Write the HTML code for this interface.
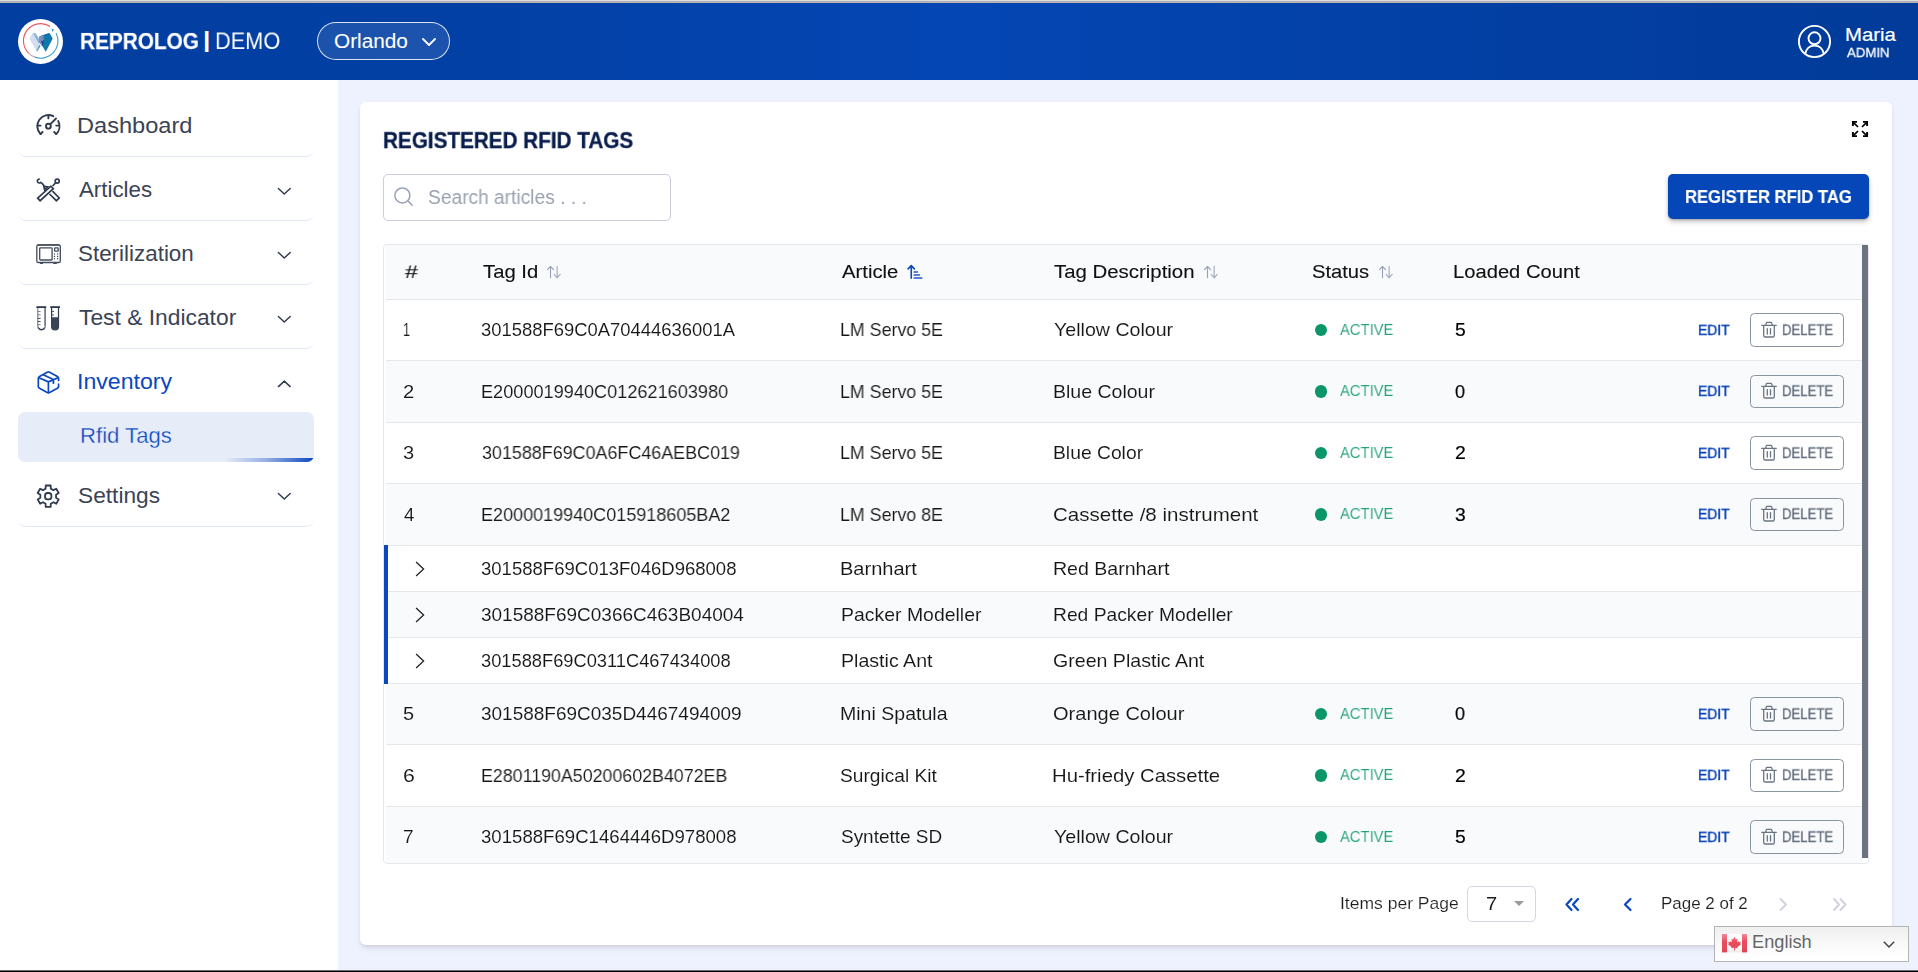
<!DOCTYPE html>
<html lang="en">
<head>
<meta charset="utf-8">
<title>REPROLOG | DEMO - Registered RFID Tags</title>
<style>
*{box-sizing:border-box;margin:0;padding:0}
html,body{width:1918px;height:972px;overflow:hidden;background:#eef2fe}
body{font-family:"Liberation Sans",Arial,Helvetica,sans-serif;position:relative;-webkit-font-smoothing:antialiased}
.t{position:absolute;white-space:pre;transform-origin:0 84.65%;display:block}
#content .t{will-change:transform}
.abs{position:absolute}
svg{position:absolute;overflow:visible}
#topstrip{position:absolute;left:0;top:0;width:1918px;height:3px;background:linear-gradient(180deg,#dedee2 0,#dedee2 33.3%,#aeaeb1 33.3%,#aeaeb1 66.6%,#bab7b2 66.6%,#bab7b2 100%);z-index:5}
header{position:absolute;left:0;top:0;width:1918px;height:80px;background:linear-gradient(90deg,#023e9f 0%,#0340a5 25%,#0446b4 50%,#0340a5 75%,#023b99 100%)}
.logo{position:absolute;left:18px;top:19px;width:45px;height:45px;border-radius:50%;background:#fff}
.pill{position:absolute;left:317px;top:22px;width:133px;height:38px;border-radius:19px;border:1px solid rgba(255,255,255,.85);background:rgba(255,255,255,.1)}
nav{position:absolute;left:0;top:80px;width:338px;height:892px;background:#fff}
.navitem{position:absolute;left:18px;width:296px;height:64px;border-bottom:1px solid #e3e8f5;border-radius:0 0 8px 8px}
.navitem.nb{border-bottom:0}
.sub{position:absolute;left:18px;top:332px;width:296px;height:50px;border-radius:7px;background:#e6ecf8;overflow:hidden}
.sub i{position:absolute;right:0;bottom:0;width:90px;height:4px;background:linear-gradient(90deg,rgba(11,71,190,0) 0%,rgba(11,71,190,.35) 45%,#0b47be 100%)}
main{position:absolute;left:338px;top:80px;width:1580px;height:892px;background:#eef2fe}
.card{position:absolute;left:22px;top:22px;width:1532px;height:843px;background:#fff;border-radius:6px;box-shadow:0 4px 6px -1px rgba(0,0,0,.1),0 2px 4px -2px rgba(0,0,0,.1)}
.search{position:absolute;left:383px;top:174px;width:288px;height:47px;border:1px solid #c9ced8;border-radius:5px;background:#fff}
.btn{position:absolute;left:1668px;top:174px;width:201px;height:45px;border-radius:5px;background:#0546b8;box-shadow:0 3px 5px rgba(0,0,0,.22),0 1px 2px rgba(0,0,0,.18)}
.tbl{position:absolute;left:383px;top:244px;width:1486px;height:620px;border:1px solid #e5e7eb;border-radius:4px;background:#fff;overflow:hidden}
.row{position:absolute;left:2px;width:1477px;border-bottom:1px solid #e5e7eb}
.row.z{background:#f9fafb}
.row.hd{background:#f9fafb}
.bar{position:absolute;left:0;top:300px;width:4px;height:139px;background:#0b47be}
.thumb{position:absolute;left:1862px;top:245px;width:6px;height:613px;background:#6b7280}
.dot{position:absolute;width:12.2px;height:12.2px;border-radius:50%;background:#0a9668}
.del{position:absolute;width:94px;height:34px;border:1px solid #8a93a2;border-radius:4.5px}
.sel{position:absolute;left:1467px;top:886px;width:69px;height:36px;border:1px solid #d3d7df;border-radius:5px;background:#fff}
.lang{position:absolute;left:1714px;top:926px;width:195px;height:36px;border:1px solid #b4b4b4;background:linear-gradient(180deg,#efefef 0%,#fbfbfb 60%,#ffffff 100%)}
#botstrip{position:absolute;left:0;top:970px;width:1918px;height:2px;background:linear-gradient(180deg,#6f7076 0,#6f7076 50%,#000 50%,#000 100%);z-index:9}
</style>
</head>
<body>
<header><div class="logo"><svg style="left:0.0px;top:0.0px" width="45" height="45" viewBox="0 0 45 45" ><path d="M32.14 7.45 A17.25 17.25 0 0 0 10.76 34.33" fill="none" stroke="#ea5660" stroke-width="1.1"/><path d="M10.76 34.33 A17.25 17.25 0 0 0 16.84 38.13" fill="none" stroke="#c2aaa6" stroke-width="1.1"/><path d="M16.84 38.13 A17.25 17.25 0 0 0 38.11 14.09" fill="none" stroke="#3fa4cb" stroke-width="1.1"/><path d="M33.6 9.6 L35.9 10.4 L34.4 13 Z" fill="#2d96bf"/><path d="M14.9 14 L11.4 19.6 L18.3 32.1 L21.4 25.2 L20.5 21 Z" fill="#d3ddf0"/><path d="M14.9 14 L17.6 14.3 L22.8 22.4 L20.8 24.6 Z" fill="#6ea5cf" opacity=".8"/><path d="M18.3 32.1 L21.3 25.6 L22.6 27 L19.3 32.5 Z" fill="#4aa3c8"/><path d="M23.2 16.4 L31.5 14 L34.7 19.6 L27.8 32.8 L21.8 23 Z" fill="#0f78ab"/><path d="M21 17.4 L25.6 16 L25.8 22 L24 27.2 L21.2 23.6 Z" fill="#7c8db6"/><path d="M23 22.5 L26 21 L25 27.5 Z" fill="#2743a3"/><path d="M27 15.5 L31 14.2 L29.6 17.4 Z" fill="#3556b3" opacity=".8"/></svg></div><h1><span class="t" style="left:80.15px;top:29.02px;font-size:23.84px;line-height:23.84px;color:#ffffff;transform:scale(0.8722,0.9494);will-change:transform;font-weight:700;-webkit-text-stroke:0.25px #ffffff;">REPROLOG</span><span class="t" style="left:202.92px;top:28.75px;font-size:21.8px;line-height:21.8px;color:#ffffff;transform:scaleX(1.2);font-weight:700;">|</span><span class="t" style="left:215.37px;top:29.02px;font-size:23.84px;line-height:23.84px;color:#ffffff;transform:scale(0.9125,0.9718);will-change:transform;font-weight:400;">DEMO</span></h1><div class="pill"></div><span class="t" style="left:334.45px;top:31.56px;font-size:19.77px;line-height:19.77px;color:#ffffff;transform:scaleX(1.0505);font-weight:400;-webkit-text-stroke:0.1px #ffffff;">Orlando</span><svg style="left:421.5px;top:38.0px" width="14" height="8" viewBox="0 0 14 8" ><path d="M1 1 L7 7 L13 1" fill="none" stroke="#fff" stroke-width="1.8" stroke-linecap="round" stroke-linejoin="round"/></svg><svg style="left:1798.0px;top:25.0px" width="33" height="33" viewBox="0 0 33 33" ><circle cx="16.5" cy="16.5" r="15.6" fill="none" stroke="#fff" stroke-width="1.9"/><circle cx="16.5" cy="13.3" r="6" fill="none" stroke="#fff" stroke-width="1.9"/><path d="M7.4 28.6 C8.4 23.4 12 20.6 16.5 20.6 C21 20.6 24.6 23.4 25.6 28.6" fill="none" stroke="#fff" stroke-width="1.9"/></svg><span class="t" style="left:1845.30px;top:26.00px;font-size:18.9px;line-height:18.9px;color:#ffffff;transform:scaleX(1.0778);font-weight:400;-webkit-text-stroke:0.2px #ffffff;">Maria</span><span class="t" style="left:1846.80px;top:46.31px;font-size:13.81px;line-height:13.81px;color:#ffffff;transform:scale(0.9548,0.9176);will-change:transform;font-weight:400;-webkit-text-stroke:0.3px #ffffff;">ADMIN</span></header>
<div id="topstrip"></div>
<nav><div class="navitem" style="top:13px"></div><svg style="left:28.0px;top:26.0px" width="40" height="40" viewBox="0 0 40 40" ><path d="M12.55 28.05 A11.1 11.1 0 0 1 25.27 10.22" fill="none" stroke="#303b50" stroke-width="1.9" stroke-linecap="round" stroke-linejoin="round"/><path d="M30.20 14.99 A11.1 11.1 0 0 1 28.25 28.05" fill="none" stroke="#303b50" stroke-width="1.9" stroke-linecap="round" stroke-linejoin="round"/><path d="M20.4 9.6 V12.4 M9.6 19.6 H12.6 M28.2 19.6 H31.2 M12.55 28.05 L14.6 26 M28.25 28.05 L26.2 26 M22.4 18.2 L28 12.5" fill="none" stroke="#303b50" stroke-width="1.9" stroke-linecap="round" stroke-linejoin="round"/><circle cx="20.4" cy="20.2" r="2.4" fill="none" stroke="#303b50" stroke-width="1.9" stroke-linecap="round" stroke-linejoin="round"/></svg><a class="t" style="left:76.76px;top:36.01px;font-size:21.37px;line-height:21.37px;color:#3b4354;transform:scaleX(1.105);font-weight:400;">Dashboard</a><div class="navitem" style="top:77px"></div><svg style="left:28.0px;top:90.0px" width="40" height="40" viewBox="0 0 40 40" ><path d="M24.5 21.2 L31.2 28 L28.4 30.7 L21.5 24" fill="none" stroke="#303b50" stroke-width="1.7" stroke-linejoin="miter"/><path d="M9.7 28.2 L22.9 16.1 L25.3 18.6 L12.1 30.7 Z" fill="none" stroke="#303b50" stroke-width="1.7" stroke-linejoin="miter" fill="#fff"/><path d="M15.9 16.4 L19.6 16.9 L16.6 19.9 Z" fill="none" stroke="#303b50" stroke-width="1.7" stroke-linejoin="miter" stroke-width="1.25" stroke-linejoin="round"/><path d="M24.7 16 L27.6 12.8" fill="none" stroke="#303b50" stroke-width="1.7" stroke-linejoin="miter"/><circle cx="29.2" cy="11.1" r="2.05" fill="none" stroke="#303b50" stroke-width="1.7" stroke-linejoin="miter"/><path d="M16.2 15.9 L13.3 12.5" fill="none" stroke="#303b50" stroke-width="1.7" stroke-linejoin="miter"/><path d="M11.2 9 A2 2 0 1 0 12.8 12.4" fill="none" stroke="#303b50" stroke-width="1.7" stroke-linejoin="miter" stroke-linecap="round"/></svg><a class="t" style="left:79.20px;top:99.81px;font-size:21.37px;line-height:21.37px;color:#3b4354;transform:scaleX(1.0437);font-weight:400;">Articles</a><svg style="left:277.0px;top:107.4px" width="14.6" height="7.8" viewBox="0 0 14.6 7.8" ><path d="M1.4 1.5 L7.3 7 L13.2 1.5" fill="none" stroke="#303b50" stroke-width="1.45" stroke-linecap="round" stroke-linejoin="round"/></svg><div class="navitem" style="top:141px"></div><svg style="left:28.0px;top:154.0px" width="40" height="40" viewBox="0 0 40 40" ><rect x="8.8" y="10.9" width="23.5" height="17.6" rx="1.6" fill="none" stroke="#434c5c" stroke-width="1.3"/><path d="M9.6 11 H31.6" stroke="#434c5c" stroke-width="1.5"/><rect x="11.7" y="13.8" width="12.4" height="12.2" rx="0.8" fill="none" stroke="#434c5c" stroke-width="1.3" stroke-width="1.4"/><rect x="26.6" y="13.9" width="3.6" height="3.3" rx="0.6" fill="none" stroke="#434c5c" stroke-width="1.3" stroke-width="1.5"/><rect x="25.9" y="19.4" width="1.2" height="1.2" fill="#434c5c"/><rect x="25.9" y="21.8" width="1.2" height="1.2" fill="#434c5c"/><rect x="25.9" y="24.1" width="1.2" height="1.2" fill="#434c5c"/><rect x="29" y="19.4" width="1.2" height="1.2" fill="#434c5c"/><rect x="29" y="21.8" width="1.2" height="1.2" fill="#434c5c"/><rect x="29" y="24.1" width="1.2" height="1.2" fill="#434c5c"/><rect x="12.1" y="29" width="2.9" height="0.9" fill="#303b50"/><rect x="25.3" y="29" width="3.5" height="0.9" fill="#303b50"/></svg><a class="t" style="left:78.14px;top:164.21px;font-size:21.37px;line-height:21.37px;color:#3b4354;transform:scaleX(1.0487);font-weight:400;">Sterilization</a><svg style="left:277.0px;top:171.4px" width="14.6" height="7.8" viewBox="0 0 14.6 7.8" ><path d="M1.4 1.5 L7.3 7 L13.2 1.5" fill="none" stroke="#303b50" stroke-width="1.45" stroke-linecap="round" stroke-linejoin="round"/></svg><div class="navitem" style="top:205px"></div><svg style="left:28.0px;top:218.0px" width="40" height="40" viewBox="0 0 40 40" ><rect x="8.4" y="8.2" width="9.8" height="1.8" fill="#303b50"/><path d="M9.8 10 V28.2 A3.7 3.7 0 0 0 17.2 28.2 V10" fill="none" stroke="#6d7585" stroke-width="1.1"/><path d="M10.2 29.6 A3.7 3.7 0 0 0 16.8 29.6" fill="none" stroke="#303b50" stroke-width="1.2"/><rect x="16.4" y="10" width="1.3" height="18" fill="#6d7585"/><rect x="9.9" y="13.1" width="2.7" height="0.9" fill="#6d7585"/><rect x="9.9" y="16.4" width="2.7" height="0.9" fill="#6d7585"/><rect x="9.9" y="19.9" width="2.7" height="0.9" fill="#303b50"/><rect x="9.9" y="23.0" width="2.7" height="0.9" fill="#303b50"/><rect x="9.9" y="26.2" width="2.7" height="0.9" fill="#6d7585"/><rect x="22.2" y="8.2" width="9.8" height="1.8" fill="#303b50"/><path d="M23.6 10 V28.4 A3.45 3.45 0 0 0 30.5 28.4 V10" fill="none" stroke="#303b50" stroke-width="1.2"/><path d="M23.6 19.2 H30.5 V28.4 A3.45 3.45 0 0 1 23.6 28.4 Z" fill="#3a4355"/><rect x="24.2" y="13.1" width="1.8" height="0.9" fill="#303b50"/><rect x="24.2" y="16.2" width="1.8" height="1.3" fill="#6d7585"/></svg><a class="t" style="left:79.20px;top:227.91px;font-size:21.37px;line-height:21.37px;color:#3b4354;transform:scaleX(1.0682);font-weight:400;">Test &amp; Indicator</a><svg style="left:277.0px;top:235.4px" width="14.6" height="7.8" viewBox="0 0 14.6 7.8" ><path d="M1.4 1.5 L7.3 7 L13.2 1.5" fill="none" stroke="#303b50" stroke-width="1.45" stroke-linecap="round" stroke-linejoin="round"/></svg><div class="navitem nb" style="top:269px"></div><svg style="left:28.0px;top:282.0px" width="40" height="40" viewBox="0 0 40 40" ><path d="M30.6 18.4 V16.6 Q30.6 15.2 29.4 14.5 L21.6 10.2 Q20.4 9.6 19.2 10.2 L11.5 14.5 Q10.3 15.2 10.3 16.6 V24.2 Q10.3 25.6 11.5 26.3 L19.2 30.5 Q20.4 31.1 21.6 30.5 L29.4 26.3 Q30.6 25.6 30.6 24.2 V22.2" fill="none" stroke="#0b47be" stroke-width="1.7" stroke-linecap="round" stroke-linejoin="round"/><path d="M10.9 15.8 L20.4 19.9 L30 15.8 M20.4 19.9 V30.6 M15.8 12.9 L25.4 17.6 V21.2" fill="none" stroke="#0b47be" stroke-width="1.7" stroke-linecap="round" stroke-linejoin="round"/></svg><a class="t" style="left:77.03px;top:291.81px;font-size:21.37px;line-height:21.37px;color:#0b47be;transform:scaleX(1.0826);font-weight:400;">Inventory</a><svg style="left:277.0px;top:299.6px" width="14.6" height="7.8" viewBox="0 0 14.6 7.8" ><path d="M1.4 6.6 L7.3 1.1 L13.2 6.6" fill="none" stroke="#303b50" stroke-width="1.45" stroke-linecap="round" stroke-linejoin="round"/></svg><div class="sub"><i></i></div><a class="t thin" style="left:79.68px;top:345.91px;font-size:21.37px;line-height:21.37px;color:#0b47be;transform:scaleX(1.0361);font-weight:400;-webkit-text-stroke:0.3px #e6ecf8;">Rfid Tags</a><div class="navitem" style="top:383px"></div><svg style="left:28.0px;top:396.0px" width="40" height="40" viewBox="0 0 40 40" ><path d="M17.60 12.64 L17.73 9.48 L22.67 9.48 L22.80 12.64 L25.45 14.16 L28.24 12.70 L30.72 16.98 L28.05 18.67 L28.05 21.73 L30.72 23.42 L28.24 27.70 L25.45 26.24 L22.80 27.76 L22.67 30.92 L17.73 30.92 L17.60 27.76 L14.95 26.24 L12.16 27.70 L9.68 23.42 L12.35 21.73 L12.35 18.67 L9.68 16.98 L12.16 12.70 L14.95 14.16 Z" fill="none" stroke="#303b50" stroke-width="1.8" stroke-linejoin="round"/><rect x="17" y="17" width="6.4" height="6.4" rx="2.6" fill="none" stroke="#303b50" stroke-width="1.8" stroke-linejoin="round" stroke-width="1.9"/></svg><a class="t" style="left:78.14px;top:405.61px;font-size:21.37px;line-height:21.37px;color:#3b4354;transform:scaleX(1.0633);font-weight:400;">Settings</a><svg style="left:277.0px;top:412.4px" width="14.6" height="7.8" viewBox="0 0 14.6 7.8" ><path d="M1.4 1.5 L7.3 7 L13.2 1.5" fill="none" stroke="#303b50" stroke-width="1.45" stroke-linecap="round" stroke-linejoin="round"/></svg></nav>
<main><section class="card"></section></main>
<div id="content"><h2 class="t" style="left:382.57px;top:129.15px;font-size:23.69px;line-height:23.69px;color:#0a1e4d;transform:scale(0.873,0.9362);will-change:transform;font-weight:700;-webkit-text-stroke:0.35px #0a1e4d;">REGISTERED RFID TAGS</h2><svg style="left:1852.0px;top:121.0px" width="16" height="16" viewBox="0 0 16 16" ><g fill="none" stroke="#000" stroke-width="1.7"><path d="M1.6 1.6 L6 6 M10 6 L14.4 1.6 M1.6 14.4 L6 10 M10 10 L14.4 14.4"/></g><g fill="none" stroke="#000" stroke-width="1.9"><path d="M0.9 5 V0.9 H5 M11 0.9 H15.1 V5 M15.1 11 V15.1 H11 M5 15.1 H0.9 V11"/></g></svg><div class="search"></div><svg style="left:394.0px;top:187.0px" width="19" height="19" viewBox="0 0 19 19" ><circle cx="8.4" cy="8.4" r="7.5" fill="none" stroke="#98a2b6" stroke-width="1.5"/><path d="M13.8 13.8 L18.2 18.2" stroke="#98a2b6" stroke-width="1.5" stroke-linecap="round"/></svg><span class="t" style="left:427.99px;top:188.34px;font-size:19.33px;line-height:19.33px;color:#9aa2b1;transform:scaleX(0.9915);font-weight:400;">Search articles . . .</span><div class="btn"></div><span class="t" style="left:1685.00px;top:188.27px;font-size:18.46px;line-height:18.46px;color:#ffffff;transform:scaleX(0.9011);font-weight:700;-webkit-text-stroke:0.15px #ffffff;">REGISTER RFID TAG</span><div class="tbl"><div class="row hd" style="top:0;height:55px"></div><div class="row" style="top:55px;height:61px;left:2px;width:1477px"></div><div class="row z" style="top:116px;height:62px;left:2px;width:1477px"></div><div class="row" style="top:178px;height:61px;left:2px;width:1477px"></div><div class="row z" style="top:239px;height:62px;left:2px;width:1477px"></div><div class="row" style="top:301px;height:46px;left:4px;width:1475px"></div><div class="row z" style="top:347px;height:46px;left:4px;width:1475px"></div><div class="row" style="top:393px;height:46px;left:4px;width:1475px"></div><div class="row z" style="top:439px;height:61px;left:2px;width:1477px"></div><div class="row" style="top:500px;height:62px;left:2px;width:1477px"></div><div class="row z" style="top:562px;height:62px;left:2px;width:1477px"></div><div class="bar"></div><b class="t" style="left:20.58px;top:18.35px;font-size:18.02px;line-height:18.02px;color:#111111;transform:scale(1.2907,0.9631);will-change:transform;font-weight:400;-webkit-text-stroke:0.12px #111111;">#</b><b class="t" style="left:98.60px;top:18.35px;font-size:18.02px;line-height:18.02px;color:#111111;transform:scaleX(1.125);font-weight:400;-webkit-text-stroke:0.12px #111111;">Tag Id</b><b class="t" style="left:457.66px;top:18.35px;font-size:18.02px;line-height:18.02px;color:#111111;transform:scaleX(1.1244);font-weight:400;-webkit-text-stroke:0.12px #111111;">Article</b><b class="t" style="left:669.59px;top:18.35px;font-size:18.02px;line-height:18.02px;color:#111111;transform:scaleX(1.1316);font-weight:400;-webkit-text-stroke:0.12px #111111;">Tag Description</b><b class="t" style="left:927.89px;top:18.35px;font-size:18.02px;line-height:18.02px;color:#111111;transform:scaleX(1.1194);font-weight:400;-webkit-text-stroke:0.12px #111111;">Status</b><b class="t" style="left:1069.18px;top:18.35px;font-size:18.02px;line-height:18.02px;color:#111111;transform:scaleX(1.1203);font-weight:400;-webkit-text-stroke:0.12px #111111;">Loaded Count</b><svg style="left:156.0px;top:13.0px" width="30" height="28" viewBox="0 0 30 28" ><path d="M10.5 19.6 V8.8 M7.4 11.6 L10.5 8.5 L13.6 11.6" fill="none" stroke="#98a3bb" stroke-width="1.15" stroke-linecap="round" stroke-linejoin="round"/><path d="M17.15 8.2 V19.6 M14.2 16.4 L17.15 19.8 L20.2 16.4" fill="none" stroke="#a4adbf" stroke-width="1.15" stroke-linecap="round" stroke-linejoin="round"/></svg><svg style="left:516.0px;top:13.0px" width="30" height="28" viewBox="0 0 30 28" ><path d="M11.25 20.3 V7.9 M8.1 10.9 L11.25 7.6 L14.4 10.9" fill="none" stroke="#0b47be" stroke-width="1.6" stroke-linecap="round" stroke-linejoin="round"/><path d="M14.2 14 H17.3 M14.2 17 H19.4 M14.2 20 H21.8" fill="none" stroke="#1f58c4" stroke-width="1.6" stroke-linecap="round"/></svg><svg style="left:813.0px;top:13.0px" width="30" height="28" viewBox="0 0 30 28" ><path d="M10.5 19.6 V8.8 M7.4 11.6 L10.5 8.5 L13.6 11.6" fill="none" stroke="#98a3bb" stroke-width="1.15" stroke-linecap="round" stroke-linejoin="round"/><path d="M17.15 8.2 V19.6 M14.2 16.4 L17.15 19.8 L20.2 16.4" fill="none" stroke="#a4adbf" stroke-width="1.15" stroke-linecap="round" stroke-linejoin="round"/></svg><svg style="left:987.9px;top:13.0px" width="30" height="28" viewBox="0 0 30 28" ><path d="M10.5 19.6 V8.8 M7.4 11.6 L10.5 8.5 L13.6 11.6" fill="none" stroke="#98a3bb" stroke-width="1.15" stroke-linecap="round" stroke-linejoin="round"/><path d="M17.15 8.2 V19.6 M14.2 16.4 L17.15 19.8 L20.2 16.4" fill="none" stroke="#a4adbf" stroke-width="1.15" stroke-linecap="round" stroke-linejoin="round"/></svg><div class="dot" style="left:931px;top:78.9px"></div><div class="del" style="left:1366px;top:68px;height:34px"></div><svg style="left:1376.0px;top:74.7px" width="18" height="20" viewBox="0 0 18 20" ><path d="M1.7 5.3 H16.3 M5.6 5.1 L6.4 2.6 Q6.5 2.3 6.9 2.3 H11.1 Q11.5 2.3 11.6 2.6 L12.4 5.1 M3.7 5.6 V15.4 Q3.7 17 5.3 17 H12.7 Q14.3 17 14.3 15.4 V5.6 M7.3 8.6 V14.1 M10.5 8.6 V14.1" fill="none" stroke="#6b7482" stroke-width="1.3" stroke-linecap="round" stroke-linejoin="round"/></svg><span class="t thin" style="left:18.69px;top:75.62px;font-size:18.17px;line-height:18.17px;color:#161616;transform:scaleX(0.7);font-weight:400;-webkit-text-stroke:0.08px #ffffff;">1</span><span class="t thin" style="left:97.48px;top:75.62px;font-size:18.17px;line-height:18.17px;color:#161616;transform:scaleX(1.0145);font-weight:400;-webkit-text-stroke:0.08px #ffffff;">301588F69C0A70444636001A</span><span class="t thin" style="left:456.31px;top:75.62px;font-size:18.17px;line-height:18.17px;color:#161616;transform:scaleX(0.9814);font-weight:400;-webkit-text-stroke:0.08px #ffffff;">LM Servo 5E</span><span class="t thin" style="left:669.58px;top:75.62px;font-size:18.17px;line-height:18.17px;color:#161616;transform:scaleX(1.0798);font-weight:400;-webkit-text-stroke:0.08px #ffffff;">Yellow Colour</span><span class="t thin" style="left:955.75px;top:76.59px;font-size:15.84px;line-height:15.84px;color:#0f9a6b;transform:scale(0.9336,0.9267);will-change:transform;font-weight:400;-webkit-text-stroke:0.15px #ffffff;">ACTIVE</span><span class="t" style="left:1070.68px;top:75.51px;font-size:18.3px;line-height:18.3px;color:#000000;transform:scaleX(1.0556);font-weight:400;-webkit-text-stroke:0.2px #000000;">5</span><span class="t" style="left:1314.21px;top:76.59px;font-size:15.84px;line-height:15.84px;color:#0a43b8;transform:scale(0.8756,0.8576);will-change:transform;font-weight:400;-webkit-text-stroke:0.5px #0a43b8;">EDIT</span><span class="t" style="left:1398.47px;top:76.71px;font-size:15.7px;line-height:15.7px;color:#5f6a79;transform:scale(0.8383,0.8862);will-change:transform;font-weight:400;-webkit-text-stroke:0.3px #5f6a79;">DELETE</span><div class="dot" style="left:931px;top:140.4px"></div><div class="del" style="left:1366px;top:130px;height:33px"></div><svg style="left:1376.0px;top:136.2px" width="18" height="20" viewBox="0 0 18 20" ><path d="M1.7 5.3 H16.3 M5.6 5.1 L6.4 2.6 Q6.5 2.3 6.9 2.3 H11.1 Q11.5 2.3 11.6 2.6 L12.4 5.1 M3.7 5.6 V15.4 Q3.7 17 5.3 17 H12.7 Q14.3 17 14.3 15.4 V5.6 M7.3 8.6 V14.1 M10.5 8.6 V14.1" fill="none" stroke="#6b7482" stroke-width="1.3" stroke-linecap="round" stroke-linejoin="round"/></svg><span class="t thin" style="left:18.84px;top:137.62px;font-size:18.17px;line-height:18.17px;color:#161616;transform:scaleX(1.1134);font-weight:400;-webkit-text-stroke:0.08px #f9fafb;">2</span><span class="t thin" style="left:97.29px;top:137.62px;font-size:18.17px;line-height:18.17px;color:#161616;transform:scaleX(0.999);font-weight:400;-webkit-text-stroke:0.08px #f9fafb;">E2000019940C012621603980</span><span class="t thin" style="left:456.31px;top:137.62px;font-size:18.17px;line-height:18.17px;color:#161616;transform:scaleX(0.9814);font-weight:400;-webkit-text-stroke:0.08px #f9fafb;">LM Servo 5E</span><span class="t thin" style="left:668.70px;top:137.62px;font-size:18.17px;line-height:18.17px;color:#161616;transform:scaleX(1.0748);font-weight:400;-webkit-text-stroke:0.08px #f9fafb;">Blue Colour</span><span class="t thin" style="left:955.75px;top:137.59px;font-size:15.84px;line-height:15.84px;color:#0f9a6b;transform:scale(0.9336,0.9267);will-change:transform;font-weight:400;-webkit-text-stroke:0.15px #f9fafb;">ACTIVE</span><span class="t" style="left:1071.27px;top:137.51px;font-size:18.3px;line-height:18.3px;color:#000000;transform:scaleX(0.9838);font-weight:400;-webkit-text-stroke:0.2px #000000;">0</span><span class="t" style="left:1314.21px;top:137.59px;font-size:15.84px;line-height:15.84px;color:#0a43b8;transform:scale(0.8756,0.8576);will-change:transform;font-weight:400;-webkit-text-stroke:0.5px #0a43b8;">EDIT</span><span class="t" style="left:1398.47px;top:137.71px;font-size:15.7px;line-height:15.7px;color:#5f6a79;transform:scale(0.8383,0.8862);will-change:transform;font-weight:400;-webkit-text-stroke:0.3px #5f6a79;">DELETE</span><div class="dot" style="left:931px;top:201.9px"></div><div class="del" style="left:1366px;top:191px;height:34px"></div><svg style="left:1376.0px;top:197.7px" width="18" height="20" viewBox="0 0 18 20" ><path d="M1.7 5.3 H16.3 M5.6 5.1 L6.4 2.6 Q6.5 2.3 6.9 2.3 H11.1 Q11.5 2.3 11.6 2.6 L12.4 5.1 M3.7 5.6 V15.4 Q3.7 17 5.3 17 H12.7 Q14.3 17 14.3 15.4 V5.6 M7.3 8.6 V14.1 M10.5 8.6 V14.1" fill="none" stroke="#6b7482" stroke-width="1.3" stroke-linecap="round" stroke-linejoin="round"/></svg><span class="t thin" style="left:18.81px;top:198.62px;font-size:18.17px;line-height:18.17px;color:#161616;transform:scaleX(1.1039);font-weight:400;-webkit-text-stroke:0.08px #ffffff;">3</span><span class="t thin" style="left:97.51px;top:198.62px;font-size:18.17px;line-height:18.17px;color:#161616;transform:scaleX(0.9865);font-weight:400;-webkit-text-stroke:0.08px #ffffff;">301588F69C0A6FC46AEBC019</span><span class="t thin" style="left:456.31px;top:198.62px;font-size:18.17px;line-height:18.17px;color:#161616;transform:scaleX(0.9814);font-weight:400;-webkit-text-stroke:0.08px #ffffff;">LM Servo 5E</span><span class="t thin" style="left:668.75px;top:198.62px;font-size:18.17px;line-height:18.17px;color:#161616;transform:scaleX(1.0623);font-weight:400;-webkit-text-stroke:0.08px #ffffff;">Blue Color</span><span class="t thin" style="left:955.75px;top:199.59px;font-size:15.84px;line-height:15.84px;color:#0f9a6b;transform:scale(0.9336,0.9267);will-change:transform;font-weight:400;-webkit-text-stroke:0.15px #ffffff;">ACTIVE</span><span class="t" style="left:1070.67px;top:198.51px;font-size:18.3px;line-height:18.3px;color:#000000;transform:scaleX(1.0629);font-weight:400;-webkit-text-stroke:0.2px #000000;">2</span><span class="t" style="left:1314.21px;top:199.59px;font-size:15.84px;line-height:15.84px;color:#0a43b8;transform:scale(0.8756,0.8576);will-change:transform;font-weight:400;-webkit-text-stroke:0.5px #0a43b8;">EDIT</span><span class="t" style="left:1398.47px;top:199.71px;font-size:15.7px;line-height:15.7px;color:#5f6a79;transform:scale(0.8383,0.8862);will-change:transform;font-weight:400;-webkit-text-stroke:0.3px #5f6a79;">DELETE</span><div class="dot" style="left:931px;top:263.4px"></div><div class="del" style="left:1366px;top:253px;height:33px"></div><svg style="left:1376.0px;top:259.2px" width="18" height="20" viewBox="0 0 18 20" ><path d="M1.7 5.3 H16.3 M5.6 5.1 L6.4 2.6 Q6.5 2.3 6.9 2.3 H11.1 Q11.5 2.3 11.6 2.6 L12.4 5.1 M3.7 5.6 V15.4 Q3.7 17 5.3 17 H12.7 Q14.3 17 14.3 15.4 V5.6 M7.3 8.6 V14.1 M10.5 8.6 V14.1" fill="none" stroke="#6b7482" stroke-width="1.3" stroke-linecap="round" stroke-linejoin="round"/></svg><span class="t thin" style="left:20.25px;top:260.62px;font-size:18.17px;line-height:18.17px;color:#161616;transform:scaleX(1.0245);font-weight:400;-webkit-text-stroke:0.08px #f9fafb;">4</span><span class="t thin" style="left:97.32px;top:260.62px;font-size:18.17px;line-height:18.17px;color:#161616;transform:scaleX(0.992);font-weight:400;-webkit-text-stroke:0.08px #f9fafb;">E2000019940C015918605BA2</span><span class="t thin" style="left:456.31px;top:260.62px;font-size:18.17px;line-height:18.17px;color:#161616;transform:scaleX(0.9814);font-weight:400;-webkit-text-stroke:0.08px #f9fafb;">LM Servo 8E</span><span class="t thin" style="left:668.72px;top:260.62px;font-size:18.17px;line-height:18.17px;color:#161616;transform:scaleX(1.1299);font-weight:400;-webkit-text-stroke:0.08px #f9fafb;">Cassette /8 instrument</span><span class="t thin" style="left:955.75px;top:260.59px;font-size:15.84px;line-height:15.84px;color:#0f9a6b;transform:scale(0.9336,0.9267);will-change:transform;font-weight:400;-webkit-text-stroke:0.15px #f9fafb;">ACTIVE</span><span class="t" style="left:1070.69px;top:260.51px;font-size:18.3px;line-height:18.3px;color:#000000;transform:scaleX(1.0556);font-weight:400;-webkit-text-stroke:0.2px #000000;">3</span><span class="t" style="left:1314.21px;top:260.59px;font-size:15.84px;line-height:15.84px;color:#0a43b8;transform:scale(0.8756,0.8576);will-change:transform;font-weight:400;-webkit-text-stroke:0.5px #0a43b8;">EDIT</span><span class="t" style="left:1398.47px;top:260.71px;font-size:15.7px;line-height:15.7px;color:#5f6a79;transform:scale(0.8383,0.8862);will-change:transform;font-weight:400;-webkit-text-stroke:0.3px #5f6a79;">DELETE</span><svg style="left:30.5px;top:315.6px" width="10" height="16" viewBox="0 0 10 16" ><path d="M1.1 1.1 L8.6 8 L1.1 14.9" fill="none" stroke="#222" stroke-width="1.3" stroke-linecap="butt" stroke-linejoin="miter"/></svg><span class="t thin" style="left:97.48px;top:314.62px;font-size:18.17px;line-height:18.17px;color:#161616;transform:scaleX(1.0204);font-weight:400;-webkit-text-stroke:0.08px #ffffff;">301588F69C013F046D968008</span><span class="t thin" style="left:456.32px;top:314.62px;font-size:18.17px;line-height:18.17px;color:#161616;transform:scaleX(1.1021);font-weight:400;-webkit-text-stroke:0.08px #ffffff;">Barnhart</span><span class="t thin" style="left:668.67px;top:314.62px;font-size:18.17px;line-height:18.17px;color:#161616;transform:scaleX(1.0772);font-weight:400;-webkit-text-stroke:0.08px #ffffff;">Red Barnhart</span><svg style="left:30.5px;top:361.6px" width="10" height="16" viewBox="0 0 10 16" ><path d="M1.1 1.1 L8.6 8 L1.1 14.9" fill="none" stroke="#222" stroke-width="1.3" stroke-linecap="butt" stroke-linejoin="miter"/></svg><span class="t thin" style="left:97.45px;top:360.62px;font-size:18.17px;line-height:18.17px;color:#161616;transform:scaleX(1.0457);font-weight:400;-webkit-text-stroke:0.08px #f9fafb;">301588F69C0366C463B04004</span><span class="t thin" style="left:456.55px;top:360.62px;font-size:18.17px;line-height:18.17px;color:#161616;transform:scaleX(1.0704);font-weight:400;-webkit-text-stroke:0.08px #f9fafb;">Packer Modeller</span><span class="t thin" style="left:668.75px;top:360.62px;font-size:18.17px;line-height:18.17px;color:#161616;transform:scaleX(1.0604);font-weight:400;-webkit-text-stroke:0.08px #f9fafb;">Red Packer Modeller</span><svg style="left:30.5px;top:407.6px" width="10" height="16" viewBox="0 0 10 16" ><path d="M1.1 1.1 L8.6 8 L1.1 14.9" fill="none" stroke="#222" stroke-width="1.3" stroke-linecap="butt" stroke-linejoin="miter"/></svg><span class="t thin" style="left:97.49px;top:406.62px;font-size:18.17px;line-height:18.17px;color:#161616;transform:scaleX(1.0065);font-weight:400;-webkit-text-stroke:0.08px #ffffff;">301588F69C0311C467434008</span><span class="t thin" style="left:456.51px;top:406.62px;font-size:18.17px;line-height:18.17px;color:#161616;transform:scaleX(1.079);font-weight:400;-webkit-text-stroke:0.08px #ffffff;">Plastic Ant</span><span class="t thin" style="left:668.72px;top:406.62px;font-size:18.17px;line-height:18.17px;color:#161616;transform:scaleX(1.0784);font-weight:400;-webkit-text-stroke:0.08px #ffffff;">Green Plastic Ant</span><div class="dot" style="left:931px;top:462.9px"></div><div class="del" style="left:1366px;top:452px;height:34px"></div><svg style="left:1376.0px;top:458.7px" width="18" height="20" viewBox="0 0 18 20" ><path d="M1.7 5.3 H16.3 M5.6 5.1 L6.4 2.6 Q6.5 2.3 6.9 2.3 H11.1 Q11.5 2.3 11.6 2.6 L12.4 5.1 M3.7 5.6 V15.4 Q3.7 17 5.3 17 H12.7 Q14.3 17 14.3 15.4 V5.6 M7.3 8.6 V14.1 M10.5 8.6 V14.1" fill="none" stroke="#6b7482" stroke-width="1.3" stroke-linecap="round" stroke-linejoin="round"/></svg><span class="t thin" style="left:18.94px;top:459.62px;font-size:18.17px;line-height:18.17px;color:#161616;transform:scaleX(1.1008);font-weight:400;-webkit-text-stroke:0.08px #f9fafb;">5</span><span class="t thin" style="left:97.45px;top:459.62px;font-size:18.17px;line-height:18.17px;color:#161616;transform:scaleX(1.0453);font-weight:400;-webkit-text-stroke:0.08px #f9fafb;">301588F69C035D4467494009</span><span class="t thin" style="left:456.48px;top:459.62px;font-size:18.17px;line-height:18.17px;color:#161616;transform:scaleX(1.0765);font-weight:400;-webkit-text-stroke:0.08px #f9fafb;">Mini Spatula</span><span class="t thin" style="left:668.70px;top:459.62px;font-size:18.17px;line-height:18.17px;color:#161616;transform:scaleX(1.1034);font-weight:400;-webkit-text-stroke:0.08px #f9fafb;">Orange Colour</span><span class="t thin" style="left:955.75px;top:460.59px;font-size:15.84px;line-height:15.84px;color:#0f9a6b;transform:scale(0.9336,0.9267);will-change:transform;font-weight:400;-webkit-text-stroke:0.15px #f9fafb;">ACTIVE</span><span class="t" style="left:1071.27px;top:459.51px;font-size:18.3px;line-height:18.3px;color:#000000;transform:scaleX(0.9838);font-weight:400;-webkit-text-stroke:0.2px #000000;">0</span><span class="t" style="left:1314.21px;top:460.59px;font-size:15.84px;line-height:15.84px;color:#0a43b8;transform:scale(0.8756,0.8576);will-change:transform;font-weight:400;-webkit-text-stroke:0.5px #0a43b8;">EDIT</span><span class="t" style="left:1398.47px;top:460.71px;font-size:15.7px;line-height:15.7px;color:#5f6a79;transform:scale(0.8383,0.8862);will-change:transform;font-weight:400;-webkit-text-stroke:0.3px #5f6a79;">DELETE</span><div class="dot" style="left:931px;top:524.4px"></div><div class="del" style="left:1366px;top:514px;height:33px"></div><svg style="left:1376.0px;top:520.2px" width="18" height="20" viewBox="0 0 18 20" ><path d="M1.7 5.3 H16.3 M5.6 5.1 L6.4 2.6 Q6.5 2.3 6.9 2.3 H11.1 Q11.5 2.3 11.6 2.6 L12.4 5.1 M3.7 5.6 V15.4 Q3.7 17 5.3 17 H12.7 Q14.3 17 14.3 15.4 V5.6 M7.3 8.6 V14.1 M10.5 8.6 V14.1" fill="none" stroke="#6b7482" stroke-width="1.3" stroke-linecap="round" stroke-linejoin="round"/></svg><span class="t thin" style="left:18.79px;top:521.62px;font-size:18.17px;line-height:18.17px;color:#161616;transform:scaleX(1.1706);font-weight:400;-webkit-text-stroke:0.08px #ffffff;">6</span><span class="t thin" style="left:97.33px;top:521.62px;font-size:18.17px;line-height:18.17px;color:#161616;transform:scaleX(0.9811);font-weight:400;-webkit-text-stroke:0.08px #ffffff;">E2801190A50200602B4072EB</span><span class="t thin" style="left:456.37px;top:521.62px;font-size:18.17px;line-height:18.17px;color:#161616;transform:scaleX(1.0551);font-weight:400;-webkit-text-stroke:0.08px #ffffff;">Surgical Kit</span><span class="t thin" style="left:668.28px;top:521.62px;font-size:18.17px;line-height:18.17px;color:#161616;transform:scaleX(1.1182);font-weight:400;-webkit-text-stroke:0.08px #ffffff;">Hu-friedy Cassette</span><span class="t thin" style="left:955.75px;top:521.59px;font-size:15.84px;line-height:15.84px;color:#0f9a6b;transform:scale(0.9336,0.9267);will-change:transform;font-weight:400;-webkit-text-stroke:0.15px #ffffff;">ACTIVE</span><span class="t" style="left:1070.67px;top:521.51px;font-size:18.3px;line-height:18.3px;color:#000000;transform:scaleX(1.0629);font-weight:400;-webkit-text-stroke:0.2px #000000;">2</span><span class="t" style="left:1314.21px;top:521.59px;font-size:15.84px;line-height:15.84px;color:#0a43b8;transform:scale(0.8756,0.8576);will-change:transform;font-weight:400;-webkit-text-stroke:0.5px #0a43b8;">EDIT</span><span class="t" style="left:1398.47px;top:521.71px;font-size:15.7px;line-height:15.7px;color:#5f6a79;transform:scale(0.8383,0.8862);will-change:transform;font-weight:400;-webkit-text-stroke:0.3px #5f6a79;">DELETE</span><div class="dot" style="left:931px;top:585.9px"></div><div class="del" style="left:1366px;top:575px;height:34px"></div><svg style="left:1376.0px;top:581.7px" width="18" height="20" viewBox="0 0 18 20" ><path d="M1.7 5.3 H16.3 M5.6 5.1 L6.4 2.6 Q6.5 2.3 6.9 2.3 H11.1 Q11.5 2.3 11.6 2.6 L12.4 5.1 M3.7 5.6 V15.4 Q3.7 17 5.3 17 H12.7 Q14.3 17 14.3 15.4 V5.6 M7.3 8.6 V14.1 M10.5 8.6 V14.1" fill="none" stroke="#6b7482" stroke-width="1.3" stroke-linecap="round" stroke-linejoin="round"/></svg><span class="t thin" style="left:18.91px;top:582.62px;font-size:18.17px;line-height:18.17px;color:#161616;transform:scaleX(1.0512);font-weight:400;-webkit-text-stroke:0.08px #f9fafb;">7</span><span class="t thin" style="left:97.48px;top:582.62px;font-size:18.17px;line-height:18.17px;color:#161616;transform:scaleX(1.0248);font-weight:400;-webkit-text-stroke:0.08px #f9fafb;">301588F69C1464446D978008</span><span class="t thin" style="left:456.59px;top:582.62px;font-size:18.17px;line-height:18.17px;color:#161616;transform:scaleX(1.0435);font-weight:400;-webkit-text-stroke:0.08px #f9fafb;">Syntette SD</span><span class="t thin" style="left:669.58px;top:582.62px;font-size:18.17px;line-height:18.17px;color:#161616;transform:scaleX(1.0798);font-weight:400;-webkit-text-stroke:0.08px #f9fafb;">Yellow Colour</span><span class="t thin" style="left:955.75px;top:583.59px;font-size:15.84px;line-height:15.84px;color:#0f9a6b;transform:scale(0.9336,0.9267);will-change:transform;font-weight:400;-webkit-text-stroke:0.15px #f9fafb;">ACTIVE</span><span class="t" style="left:1070.68px;top:582.51px;font-size:18.3px;line-height:18.3px;color:#000000;transform:scaleX(1.0556);font-weight:400;-webkit-text-stroke:0.2px #000000;">5</span><span class="t" style="left:1314.21px;top:583.59px;font-size:15.84px;line-height:15.84px;color:#0a43b8;transform:scale(0.8756,0.8576);will-change:transform;font-weight:400;-webkit-text-stroke:0.5px #0a43b8;">EDIT</span><span class="t" style="left:1398.47px;top:583.71px;font-size:15.7px;line-height:15.7px;color:#5f6a79;transform:scale(0.8383,0.8862);will-change:transform;font-weight:400;-webkit-text-stroke:0.3px #5f6a79;">DELETE</span></div><div class="thumb"></div><span class="t thin" style="left:1339.76px;top:894.70px;font-size:17.01px;line-height:17.01px;color:#1e1e1e;transform:scaleX(1.0299);font-weight:400;-webkit-text-stroke:0.15px #fff;">Items per Page</span><div class="sel"></div><span class="t" style="left:1485.69px;top:895.00px;font-size:18.9px;line-height:18.9px;color:#1c1c1c;transform:scaleX(1.0625);font-weight:400;">7</span><svg style="left:1514.0px;top:901.0px" width="10" height="5" viewBox="0 0 10 5" ><path d="M0 0 H10 L5 5 Z" fill="#9a9a9a"/></svg><svg style="left:1564.5px;top:898.0px" width="14" height="13" viewBox="0 0 14 13" ><path d="M6.5 1 L1.5 6.5 L6.5 12 M13 1 L8 6.5 L13 12" fill="none" stroke="#0b47be" stroke-width="2.2" stroke-linecap="round" stroke-linejoin="round"/></svg><svg style="left:1622.5px;top:898.0px" width="9" height="13" viewBox="0 0 9 13" ><path d="M7.5 1 L2 6.5 L7.5 12" fill="none" stroke="#0b47be" stroke-width="2.2" stroke-linecap="round" stroke-linejoin="round"/></svg><span class="t thin" style="left:1661.44px;top:895.83px;font-size:16.86px;line-height:16.86px;color:#1e1e1e;transform:scaleX(1.0059);font-weight:400;-webkit-text-stroke:0.1px #fff;">Page 2 of 2</span><svg style="left:1779.0px;top:898.0px" width="9" height="13" viewBox="0 0 9 13" ><path d="M1.5 1 L7 6.5 L1.5 12" fill="none" stroke="#cfd3dc" stroke-width="2" stroke-linecap="round" stroke-linejoin="round"/></svg><svg style="left:1832.5px;top:898.0px" width="14" height="13" viewBox="0 0 14 13" ><path d="M1 1 L6 6.5 L1 12 M7.5 1 L12.5 6.5 L7.5 12" fill="none" stroke="#cfd3dc" stroke-width="2" stroke-linecap="round" stroke-linejoin="round"/></svg></div>
<div id="langsel"><div class="lang"></div><svg style="left:1722.0px;top:934.3px" width="25" height="18.4" viewBox="0 0 25 18.4" ><defs><linearGradient id="fg" x1="0" y1="0" x2="0" y2="1"><stop offset="0" stop-color="#fff" stop-opacity=".35"/><stop offset=".45" stop-color="#fff" stop-opacity="0"/><stop offset="1" stop-color="#000" stop-opacity=".08"/></linearGradient></defs><rect width="25" height="18.4" fill="#fff"/><rect width="5" height="18.4" fill="#e84a5a"/><rect x="20" width="5" height="18.4" fill="#e84a5a"/><path d="M12.5 2.6 L13.9 5.4 L15.6 4.6 L15 8.4 L16.8 7 L17.2 8.2 L19 8 L18.2 9.8 L18.9 10.4 L15.4 12.9 L15.8 14.3 L12.9 13.8 L13 16.4 L12 16.4 L12.1 13.8 L9.2 14.3 L9.6 12.9 L6.1 10.4 L6.8 9.8 L6 8 L7.8 8.2 L8.2 7 L10 8.4 L9.4 4.6 L11.1 5.4 Z" fill="#e84a5a"/><rect width="25" height="18.4" fill="url(#fg)"/></svg><span class="t" style="left:1752.43px;top:933.00px;font-size:18.9px;line-height:18.9px;color:#666666;transform:scaleX(0.9637);font-weight:400;">English</span><svg style="left:1883.0px;top:940.5px" width="12" height="7" viewBox="0 0 12 7" ><path d="M0.8 0.8 L6 6 L11.2 0.8" fill="none" stroke="#444" stroke-width="1.5"/></svg></div>
<div id="botstrip"></div>
</body>
</html>
